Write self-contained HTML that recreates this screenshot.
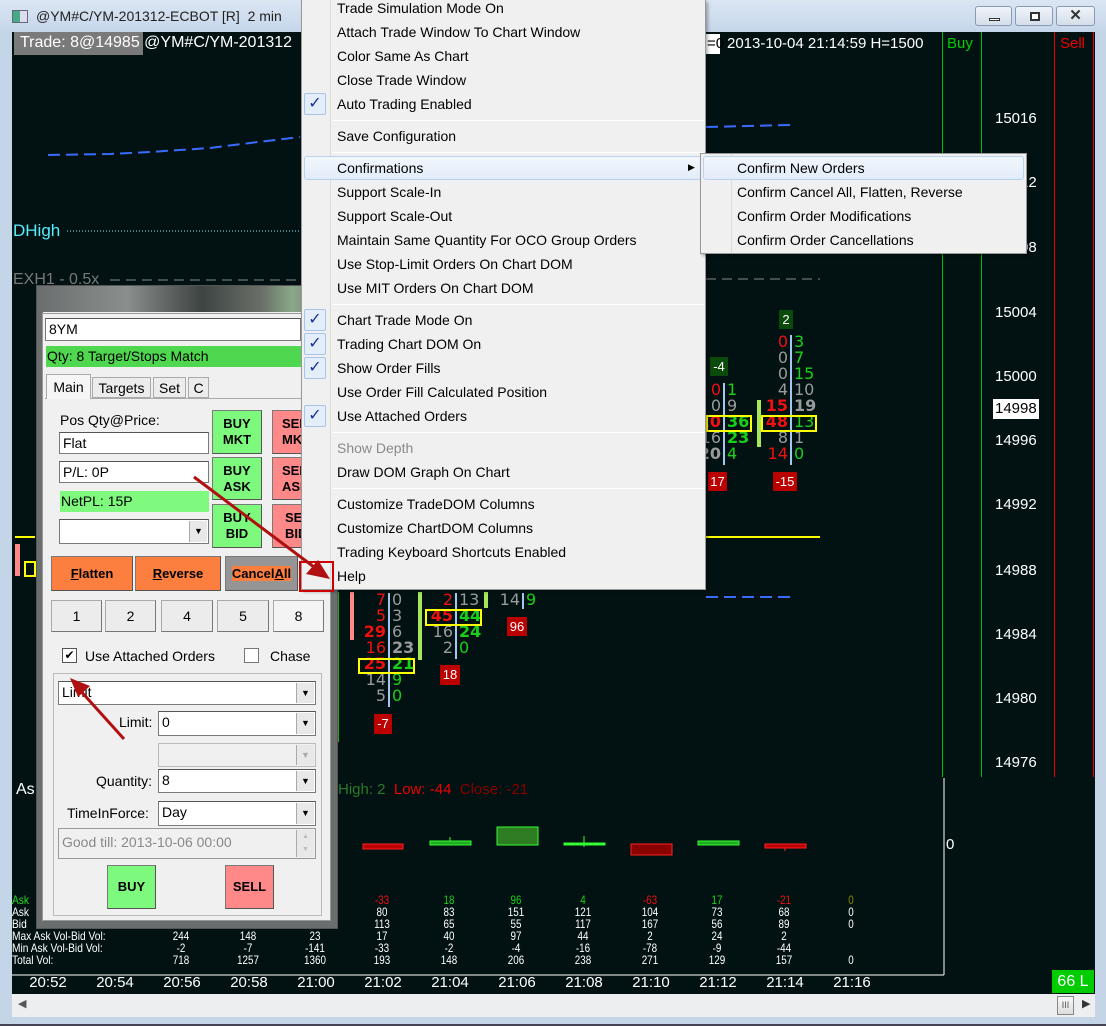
<!DOCTYPE html>
<html><head><meta charset="utf-8">
<style>
*{margin:0;padding:0;box-sizing:border-box}
body{width:1106px;height:1026px;overflow:hidden;background:#c4d5e8;font-family:"Liberation Sans",sans-serif;position:relative}
.a{position:absolute}
.t{position:absolute;white-space:nowrap}
.mi{position:absolute;left:337px;font-size:14px;color:#000;white-space:nowrap}
.ck{position:absolute;left:304px;width:22px;height:22px;border:1px solid #a8c4e8;background:#e3eefa;border-radius:2px;color:#1a2ea0;font-size:16px;text-align:center;line-height:20px}
.sep{position:absolute;left:332px;width:372px;height:1px;background:#d6d6d6;border-bottom:1px solid #fff}
.fp{position:absolute;font-size:16px;white-space:nowrap;font-family:"DejaVu Sans","Liberation Sans",sans-serif}
.r{color:#f01010}.g{color:#18d018}.gy{color:#9a9a9a}.w{color:#fff}
.b{font-weight:bold}
.dv{position:absolute;width:2px;background:#a0c8f0}
.lb{position:absolute;font-size:13px;color:#fff;text-align:center;line-height:19px}
.btn{position:absolute;border:1px solid #7a7a7a;font-size:13px;font-weight:bold;text-align:center;color:#000;border-right-color:#555;border-bottom-color:#555}
.inp{position:absolute;background:#fff;border:1px solid #7a7a7a;border-top-color:#555;font-size:14px;padding-left:3px;line-height:20px}
.dd{position:absolute;right:1px;top:1px;bottom:1px;width:18px;background:#e8e8e8;border-left:1px solid #aaa;font-size:9px;text-align:center;line-height:20px}
.nb{position:absolute;top:600px;height:32px;background:#ececec;border:1px solid #aaa;border-right-color:#777;border-bottom-color:#777;font-size:14px;text-align:center;line-height:30px}
.st{position:absolute;font-size:12px;color:#fff;white-space:nowrap;transform:scaleX(0.82);transform-origin:center;width:60px;text-align:center;line-height:12px}
.tm{position:absolute;top:974px;font-size:15px;color:#fff;width:60px;text-align:center}
.px{position:absolute;left:995px;font-size:15px;color:#fff}
</style></head><body>
<!-- title -->
<div class="a" style="left:0;top:0;width:1106px;height:32px;background:linear-gradient(#dbe6f3,#c5d6ea)"></div>
<div class="a" style="left:12px;top:10px;width:16px;height:13px;border:1px solid #667;background:linear-gradient(90deg,#4a8 50%,#dde 50%)"></div>
<div class="t" style="left:36px;top:8px;font-size:14px;color:#222">@YM#C/YM-201312-ECBOT [R]&nbsp; 2 min</div>
<div class="a" style="left:975px;top:6px;width:37px;height:20px;border:1px solid #8a9ab0;border-radius:3px;background:linear-gradient(#f0f4fa,#d4deea)"><div class="a" style="left:13px;top:11px;width:11px;height:3px;border:1px solid #333;background:#fff"></div></div>
<div class="a" style="left:1015px;top:6px;width:38px;height:20px;border:1px solid #8a9ab0;border-radius:3px;background:linear-gradient(#f0f4fa,#d4deea)"><div class="a" style="left:14px;top:5px;width:10px;height:9px;border:2px solid #333;background:#fff"></div></div>
<div class="a" style="left:1056px;top:6px;width:39px;height:20px;border:1px solid #8a9ab0;border-radius:3px;background:linear-gradient(#f0f4fa,#d4deea);font-size:15px;font-weight:bold;text-align:center;color:#333;line-height:18px">✕</div>

<!-- chart -->
<div class="a" style="left:12px;top:32px;width:1083px;height:962px;background:#021212"></div>
<div class="a" style="left:14px;top:32px;width:129px;height:23px;background:#7a7a7a"></div>
<div class="t" style="left:20px;top:34px;font-size:16px;color:#fff">Trade: 8@14985 @YM#C/YM-201312</div>
<div class="a" style="left:706px;top:34px;width:14px;height:20px;background:#fff"></div>
<div class="t" style="left:707px;top:35px;font-size:15px;color:#000">=0</div>
<div class="t" style="left:727px;top:35px;font-size:15px;color:#fff">2013-10-04 21:14:59 H=1500</div>
<div class="t" style="left:947px;top:35px;font-size:15px;color:#0c0">Buy</div>
<div class="t" style="left:1060px;top:35px;font-size:15px;color:#e00">Sell</div>
<div class="a" style="left:942px;top:32px;width:1px;height:745px;background:#0b0"></div>
<div class="a" style="left:981px;top:32px;width:1px;height:745px;background:#0b0"></div>
<div class="a" style="left:1054px;top:32px;width:1px;height:745px;background:#e00"></div>
<div class="a" style="left:1093px;top:32px;width:1px;height:745px;background:#e00"></div>
<svg class="a" style="left:0;top:0" width="1106" height="1026">
<polyline points="48,155 110,154 150,152 210,148 250,143 300,137" fill="none" stroke="#3a6bff" stroke-width="2" stroke-dasharray="12,6"/>
<polyline points="706,127 790,125" fill="none" stroke="#3a6bff" stroke-width="2" stroke-dasharray="12,6"/>
<line x1="67" y1="231" x2="300" y2="231" stroke="#8ee" stroke-dasharray="1,2"/>
<line x1="110" y1="280" x2="300" y2="280" stroke="#888" stroke-dasharray="10,6"/>
<line x1="706" y1="279" x2="820" y2="279" stroke="#888" stroke-dasharray="10,6"/>
<line x1="706" y1="537" x2="820" y2="537" stroke="#ff0" stroke-width="2"/>
<line x1="15" y1="537" x2="35" y2="537" stroke="#ff0" stroke-width="2"/>
<line x1="706" y1="597" x2="790" y2="597" stroke="#3a6bff" stroke-width="2" stroke-dasharray="12,6"/>
<line x1="12" y1="975" x2="944" y2="975" stroke="#fff"/>
<line x1="944" y1="778" x2="944" y2="975" stroke="#fff"/>
<rect x="363" y="844" width="40" height="5" fill="#b00" stroke="#f22"/>
<rect x="430" y="841" width="41" height="4" fill="#2a2" stroke="#3f3"/><line x1="450" y1="837" x2="450" y2="841" stroke="#3f3"/>
<rect x="497" y="827" width="41" height="18" fill="#2e7d22" stroke="#3f3"/>
<rect x="564" y="843" width="41" height="2" fill="#3f3" stroke="#3f3"/><line x1="584" y1="836" x2="584" y2="847" stroke="#3f3"/>
<rect x="631" y="844" width="41" height="11" fill="#800" stroke="#f22"/>
<rect x="698" y="841" width="41" height="4" fill="#2a2" stroke="#3f3"/>
<rect x="765" y="844" width="41" height="4" fill="#b00" stroke="#f22"/><line x1="785" y1="848" x2="785" y2="851" stroke="#f22"/>
</svg>
<div class="t" style="left:13px;top:221px;font-size:17px;color:#5ef">DHigh</div>
<div class="t" style="left:13px;top:271px;font-size:16px;color:#777">EXH1 - 0.5x</div>
<div class="t" style="left:16px;top:781px;font-size:16px;color:#fff">As</div>
<div class="t" style="left:338px;top:781px;font-size:15px"><span style="color:#2a7a2a">High: 2</span>&nbsp; <span style="color:#e00">Low: -44</span>&nbsp; <span style="color:#800">Close: -21</span></div>
<div class="t" style="left:946px;top:836px;font-size:15px;color:#fff">0</div>
<div class="px" style="top:110px">15016</div><div class="px" style="top:174px">15012</div><div class="px" style="top:239px">15008</div><div class="px" style="top:304px">15004</div><div class="px" style="top:368px">15000</div>
<div class="a" style="left:993px;top:399px;width:46px;height:20px;background:#fff"></div><div class="px" style="top:400px;color:#000">14998</div>
<div class="px" style="top:432px">14996</div><div class="px" style="top:496px">14992</div><div class="px" style="top:562px">14988</div><div class="px" style="top:626px">14984</div><div class="px" style="top:690px">14980</div><div class="px" style="top:754px">14976</div>
<div class="a" style="left:15px;top:544px;width:5px;height:32px;background:#f88"></div>
<div class="a" style="left:24px;top:561px;width:12px;height:16px;border:2px solid #ff0"></div>

<!-- footprint -->
<div class="a" style="left:779px;top:310px;width:14px;height:19px;background:#0a4a0a"></div><div class="lb" style="left:779px;top:310px;width:14px">2</div>
<div class="a" style="left:710px;top:357px;width:18px;height:19px;background:#0a4a0a"></div><div class="lb" style="left:710px;top:357px;width:18px">-4</div>
<div class="dv" style="left:790px;top:335px;height:130px"></div>
<div class="fp" style="left:748px;top:334px;width:40px;text-align:right;line-height:16px"><span class="r">0</span><br><span class="gy">0</span><br><span class="gy">0</span><br><span class="gy">4</span><br><span class="r b">15</span><br><span class="r b">48</span><br><span class="gy">8</span><br><span class="r">14</span></div>
<div class="fp" style="left:794px;top:334px;line-height:16px"><span class="g">3</span><br><span class="g">7</span><br><span class="g">15</span><br><span class="gy">10</span><br><span class="gy b">19</span><br><span class="g">13</span><br><span class="gy">1</span><br><span class="g">0</span></div>
<div class="a" style="left:761px;top:415px;width:56px;height:17px;border:2px solid #ff0"></div>
<div class="dv" style="left:723px;top:383px;height:82px"></div>
<div class="fp" style="left:680px;top:382px;width:41px;text-align:right;line-height:16px"><span class="r">0</span><br><span class="gy">0</span><br><span class="r b">20</span><br><span class="gy">16</span><br><span class="gy b">20</span></div>
<div class="fp" style="left:727px;top:382px;line-height:16px"><span class="g">1</span><br><span class="gy">9</span><br><span class="g b">36</span><br><span class="g b">23</span><br><span class="g">4</span></div>
<div class="a" style="left:706px;top:415px;width:46px;height:17px;border:2px solid #ff0"></div>
<div class="a" style="left:757px;top:400px;width:4px;height:47px;background:#a6e85a"></div>
<div class="a" style="left:708px;top:472px;width:19px;height:19px;background:#b00"></div><div class="lb" style="left:708px;top:472px;width:19px">17</div>
<div class="a" style="left:773px;top:472px;width:24px;height:19px;background:#b00"></div><div class="lb" style="left:773px;top:472px;width:24px">-15</div>

<div class="a" style="left:337px;top:592px;width:2px;height:150px;background:#2a2"></div>
<div class="a" style="left:350px;top:592px;width:4px;height:48px;background:#f88"></div>
<div class="dv" style="left:388px;top:593px;height:114px"></div>
<div class="fp" style="left:340px;top:592px;width:46px;text-align:right;line-height:16px"><span class="r">7</span><br><span class="r">5</span><br><span class="r b">29</span><br><span class="r">16</span><br><span class="r b">25</span><br><span class="gy">14</span><br><span class="gy">5</span></div>
<div class="fp" style="left:392px;top:592px;line-height:16px"><span class="gy">0</span><br><span class="gy">3</span><br><span class="gy">6</span><br><span class="gy b">23</span><br><span class="g b">21</span><br><span class="g">9</span><br><span class="g">0</span></div>
<div class="a" style="left:358px;top:658px;width:57px;height:16px;border:2px solid #ff0"></div>
<div class="a" style="left:418px;top:592px;width:4px;height:68px;background:#a6e85a"></div>
<div class="dv" style="left:455px;top:593px;height:66px"></div>
<div class="fp" style="left:410px;top:592px;width:43px;text-align:right;line-height:16px"><span class="r">2</span><br><span class="r b">45</span><br><span class="gy">16</span><br><span class="gy">2</span></div>
<div class="fp" style="left:459px;top:592px;line-height:16px"><span class="gy">13</span><br><span class="g b">44</span><br><span class="g b">24</span><br><span class="g">0</span></div>
<div class="a" style="left:425px;top:609px;width:57px;height:17px;border:2px solid #ff0"></div>
<div class="a" style="left:484px;top:592px;width:4px;height:16px;background:#a6e85a"></div>
<div class="dv" style="left:522px;top:593px;height:16px"></div>
<div class="fp" style="left:495px;top:592px;width:25px;text-align:right;line-height:16px"><span class="gy">14</span></div>
<div class="fp" style="left:526px;top:592px;line-height:16px"><span class="g">9</span></div>
<div class="a" style="left:507px;top:617px;width:20px;height:19px;background:#b00"></div><div class="lb" style="left:507px;top:617px;width:20px">96</div>
<div class="a" style="left:440px;top:665px;width:20px;height:20px;background:#b00"></div><div class="lb" style="left:440px;top:665px;width:20px">18</div>
<div class="a" style="left:374px;top:714px;width:18px;height:20px;background:#b00"></div><div class="lb" style="left:374px;top:714px;width:18px">-7</div>

<!-- stats table -->
<div class="t" style="left:12px;top:894px;font-size:12px;color:#fff;line-height:12px;transform:scaleX(.85);transform-origin:left"><span style="color:#2d2">Ask</span><br>Ask<br>Bid<br>Max Ask Vol-Bid Vol:<br>Min Ask Vol-Bid Vol:<br>Total Vol:</div>
<div class="st" style="left:151px;top:930px">244<br>-2<br>718</div>
<div class="st" style="left:218px;top:930px">148<br>-7<br>1257</div>
<div class="st" style="left:285px;top:930px">23<br>-141<br>1360</div>
<div class="st" style="left:352px;top:894px"><span class="r">-33</span><br>80<br>113<br>17<br>-33<br>193</div>
<div class="st" style="left:419px;top:894px"><span class="g">18</span><br>83<br>65<br>40<br>-2<br>148</div>
<div class="st" style="left:486px;top:894px"><span class="g">96</span><br>151<br>55<br>97<br>-4<br>206</div>
<div class="st" style="left:553px;top:894px"><span class="g">4</span><br>121<br>117<br>44<br>-16<br>238</div>
<div class="st" style="left:620px;top:894px"><span class="r">-63</span><br>104<br>167<br>2<br>-78<br>271</div>
<div class="st" style="left:687px;top:894px"><span class="g">17</span><br>73<br>56<br>24<br>-9<br>129</div>
<div class="st" style="left:754px;top:894px"><span class="r">-21</span><br>68<br>89<br>2<br>-44<br>157</div>
<div class="st" style="left:821px;top:894px"><span style="color:#880">0</span><br>0<br>0<br><br><br>0</div>
<div class="tm" style="left:18px">20:52</div><div class="tm" style="left:85px">20:54</div><div class="tm" style="left:152px">20:56</div><div class="tm" style="left:219px">20:58</div><div class="tm" style="left:286px">21:00</div><div class="tm" style="left:353px">21:02</div><div class="tm" style="left:420px">21:04</div><div class="tm" style="left:487px">21:06</div><div class="tm" style="left:554px">21:08</div><div class="tm" style="left:621px">21:10</div><div class="tm" style="left:688px">21:12</div><div class="tm" style="left:755px">21:14</div><div class="tm" style="left:822px">21:16</div>
<div class="a" style="left:1052px;top:970px;width:42px;height:23px;background:#0c0;color:#fff;font-size:16px;text-align:center;line-height:23px">66 L</div>
<!-- scrollbar -->
<div class="a" style="left:12px;top:994px;width:1083px;height:23px;background:#eceef0"></div>
<div class="t" style="left:18px;top:997px;font-size:11px;color:#555">◀</div>
<div class="a" style="left:1057px;top:996px;width:17px;height:19px;border:1px solid #888;background:linear-gradient(#f8f8f8,#ddd);font-size:9px;text-align:center;line-height:17px;color:#555">III</div>
<div class="t" style="left:1082px;top:997px;font-size:11px;color:#333">▶</div>
<div class="a" style="left:0;top:1024px;width:1106px;height:2px;background:#445"></div>

<!-- Trade window -->
<div class="a" style="left:36px;top:285px;width:302px;height:644px;background:#f0f0f0;border:1px solid #555"></div>
<div class="a" style="left:37px;top:286px;width:300px;height:26px;background:linear-gradient(90deg,#6a6e6e,#8a8e8c 30%,#3e4442 55%,#6a7068 75%,#8aa88a 85%,#6a6e6e)"></div>
<div class="a" style="left:37px;top:312px;width:6px;height:616px;background:#6a6e6e"></div>
<div class="a" style="left:331px;top:312px;width:6px;height:616px;background:#6a6e6e"></div>
<div class="a" style="left:37px;top:921px;width:300px;height:7px;background:#6a6e6e"></div>
<div class="a" style="left:42px;top:313px;width:289px;height:608px;background:#f0f0f0;border:1px solid #999"></div>
<div class="inp" style="left:45px;top:318px;width:256px;height:23px">8YM</div>
<div class="a" style="left:46px;top:346px;width:255px;height:21px;background:#4fd84f;font-size:14px;padding-left:1px;line-height:21px">Qty: 8 Target/Stops Match</div>
<div class="a" style="left:45px;top:398px;width:280px;height:1px;background:#aaa"></div>
<div class="a" style="left:46px;top:374px;width:45px;height:25px;background:#f6f6f6;border:1px solid #aaa;border-bottom:none;font-size:14px;text-align:center;line-height:24px">Main</div>
<div class="a" style="left:92px;top:377px;width:59px;height:21px;background:#ececec;border:1px solid #aaa;font-size:14px;text-align:center;line-height:21px">Targets</div>
<div class="a" style="left:153px;top:377px;width:33px;height:21px;background:#ececec;border:1px solid #aaa;font-size:14px;text-align:center;line-height:21px">Set</div>
<div class="a" style="left:188px;top:377px;width:21px;height:21px;background:#ececec;border:1px solid #aaa;font-size:14px;text-align:center;line-height:21px">C</div>
<div class="t" style="left:60px;top:412px;font-size:14px">Pos Qty@Price:</div>
<div class="inp" style="left:59px;top:432px;width:150px;height:22px">Flat</div>
<div class="inp" style="left:59px;top:461px;width:150px;height:22px">P/L: 0P</div>
<div class="a" style="left:60px;top:491px;width:149px;height:21px;background:#7ffa7f;font-size:14px;padding-left:1px;line-height:21px">NetPL: 15P</div>
<div class="inp" style="left:59px;top:519px;width:150px;height:25px"><div class="dd">▼</div></div>
<div class="btn" style="left:212px;top:410px;width:50px;height:44px;background:#7dfa7d;line-height:16px;padding-top:5px">BUY<br>MKT</div>
<div class="btn" style="left:212px;top:457px;width:50px;height:43px;background:#7dfa7d;line-height:16px;padding-top:5px">BUY<br>ASK</div>
<div class="btn" style="left:212px;top:504px;width:50px;height:44px;background:#7dfa7d;line-height:16px;padding-top:5px">BUY<br>BID</div>
<div class="btn" style="left:272px;top:410px;width:30px;height:44px;background:#f88;line-height:16px;padding-top:5px;text-align:left;padding-left:9px;overflow:hidden">SELL<br>MKT</div>
<div class="btn" style="left:272px;top:457px;width:30px;height:43px;background:#f88;line-height:16px;padding-top:5px;text-align:left;padding-left:9px;overflow:hidden">SELL<br>ASK</div>
<div class="btn" style="left:272px;top:504px;width:30px;height:44px;background:#f88;line-height:16px;padding-top:5px;text-align:left;padding-left:12px;overflow:hidden">SELL<br>BID</div>
<div class="btn" style="left:51px;top:556px;width:82px;height:35px;background:#fd7f3f;line-height:33px"><u>F</u>latten</div>
<div class="btn" style="left:135px;top:556px;width:86px;height:35px;background:#fd7f3f;line-height:33px"><u>R</u>everse</div>
<div class="btn" style="left:225px;top:556px;width:73px;height:35px;background:#959595;line-height:33px"><span style="background:#fd7f3f">Cancel<u>A</u>ll</span></div>
<div class="nb" style="left:51px;width:51px">1</div><div class="nb" style="left:105px;width:51px">2</div><div class="nb" style="left:161px;width:52px">4</div><div class="nb" style="left:217px;width:52px">5</div><div class="nb" style="left:273px;width:51px;background:#f4f4f4">8</div>
<div class="a" style="left:62px;top:648px;width:15px;height:15px;border:1px solid #555;background:#fff;font-size:12px;line-height:13px;text-align:center">✔</div>
<div class="t" style="left:85px;top:648px;font-size:14px">Use Attached Orders</div>
<div class="a" style="left:244px;top:648px;width:15px;height:15px;border:1px solid #777;background:#fff"></div>
<div class="t" style="left:270px;top:648px;font-size:14px">Chase</div>
<div class="a" style="left:53px;top:673px;width:269px;height:243px;border:1px solid #bbb"></div>
<div class="inp" style="left:58px;top:681px;width:258px;height:24px">Limit<div class="dd">▼</div></div>
<div class="t" style="left:119px;top:714px;font-size:14px">Limit:</div>
<div class="inp" style="left:158px;top:711px;width:158px;height:25px">0<div class="dd">▼</div></div>
<div class="inp" style="left:158px;top:743px;width:158px;height:24px;background:#f0f0f0;border-color:#bbb"><div class="dd" style="color:#aaa">▼</div></div>
<div class="t" style="left:96px;top:773px;font-size:14px">Quantity:</div>
<div class="inp" style="left:158px;top:769px;width:158px;height:24px">8<div class="dd">▼</div></div>
<div class="t" style="left:67px;top:805px;font-size:14px">TimeInForce:</div>
<div class="inp" style="left:158px;top:801px;width:158px;height:25px">Day<div class="dd">▼</div></div>
<div class="inp" style="left:58px;top:828px;width:258px;height:31px;background:#f0f0f0;border-color:#999;color:#888;line-height:27px">Good till: 2013-10-06 00:00<div class="dd" style="color:#bbb;line-height:13px;font-size:7px">▲<br>▼</div></div>
<div class="btn" style="left:107px;top:865px;width:49px;height:44px;background:#7dfa7d;line-height:42px">BUY</div>
<div class="btn" style="left:225px;top:865px;width:49px;height:44px;background:#f88;line-height:42px">SELL</div>

<!-- context menu -->
<div class="a" style="left:301px;top:0;width:405px;height:590px;background:#f0f0f0;border:1px solid #999;border-top:none;box-shadow:2px 2px 3px rgba(0,0,0,.3)"></div>
<div class="a" style="left:330px;top:0;width:1px;height:589px;background:#dcdcdc"></div>
<div class="a" style="left:304px;top:156px;width:399px;height:24px;border:1px solid #b8d2f0;background:linear-gradient(#f2f7fd,#e2ecf8);border-radius:3px"></div>
<div class="mi" style="top:0">Trade Simulation Mode On</div>
<div class="mi" style="top:24px">Attach Trade Window To Chart Window</div>
<div class="mi" style="top:48px">Color Same As Chart</div>
<div class="mi" style="top:72px">Close Trade Window</div>
<div class="ck" style="top:93px">✓</div><div class="mi" style="top:96px">Auto Trading Enabled</div>
<div class="sep" style="top:120px"></div>
<div class="mi" style="top:128px">Save Configuration</div>
<div class="sep" style="top:152px"></div>
<div class="mi" style="top:160px">Confirmations</div>
<div class="t" style="left:688px;top:162px;font-size:9px">▶</div>
<div class="mi" style="top:184px">Support Scale-In</div>
<div class="mi" style="top:208px">Support Scale-Out</div>
<div class="mi" style="top:232px">Maintain Same Quantity For OCO Group Orders</div>
<div class="mi" style="top:256px">Use Stop-Limit Orders On Chart DOM</div>
<div class="mi" style="top:280px">Use MIT Orders On Chart DOM</div>
<div class="sep" style="top:304px"></div>
<div class="ck" style="top:309px">✓</div><div class="mi" style="top:312px">Chart Trade Mode On</div>
<div class="ck" style="top:333px">✓</div><div class="mi" style="top:336px">Trading Chart DOM On</div>
<div class="ck" style="top:357px">✓</div><div class="mi" style="top:360px">Show Order Fills</div>
<div class="mi" style="top:384px">Use Order Fill Calculated Position</div>
<div class="ck" style="top:405px">✓</div><div class="mi" style="top:408px">Use Attached Orders</div>
<div class="sep" style="top:432px"></div>
<div class="mi" style="top:440px;color:#8a8a8a">Show Depth</div>
<div class="mi" style="top:464px">Draw DOM Graph On Chart</div>
<div class="sep" style="top:488px"></div>
<div class="mi" style="top:496px">Customize TradeDOM Columns</div>
<div class="mi" style="top:520px">Customize ChartDOM Columns</div>
<div class="mi" style="top:544px">Trading Keyboard Shortcuts Enabled</div>
<div class="mi" style="top:568px">Help</div>

<!-- submenu -->
<div class="a" style="left:700px;top:153px;width:327px;height:101px;background:#f0f0f0;border:1px solid #999;box-shadow:2px 2px 3px rgba(0,0,0,.3)"></div>
<div class="a" style="left:731px;top:154px;width:1px;height:99px;background:#dcdcdc"></div>
<div class="a" style="left:703px;top:156px;width:321px;height:24px;border:1px solid #b8d2f0;background:linear-gradient(#f2f7fd,#e2ecf8);border-radius:3px"></div>
<div class="mi" style="left:737px;top:160px">Confirm New Orders</div>
<div class="mi" style="left:737px;top:184px">Confirm Cancel All, Flatten, Reverse</div>
<div class="mi" style="left:737px;top:208px">Confirm Order Modifications</div>
<div class="mi" style="left:737px;top:232px">Confirm Order Cancellations</div>

<!-- annotations -->
<svg class="a" style="left:0;top:0" width="1106" height="1026">
<rect x="300" y="562" width="33" height="29" fill="none" stroke="#c00" stroke-width="2"/>
<line x1="194" y1="477" x2="318" y2="570" stroke="#b01010" stroke-width="3"/>
<polygon points="330,579 306,574 318,560" fill="#b01010"/>
<line x1="124" y1="739" x2="78" y2="688" stroke="#b01010" stroke-width="3"/>
<polygon points="70,678 90,686 78,697" fill="#b01010"/>
</svg>
</body></html>
